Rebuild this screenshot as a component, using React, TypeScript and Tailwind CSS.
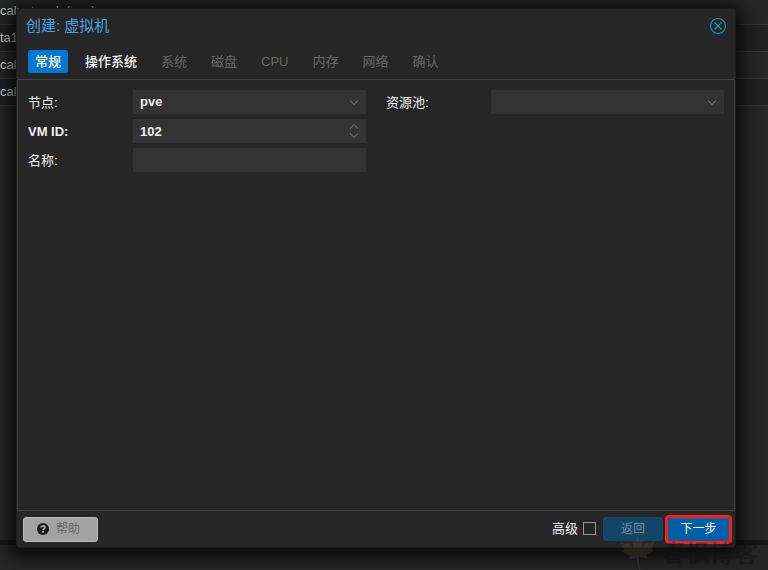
import React, { useState } from 'react';

const TABS = [
  { label: '常规', enabled: true },
  { label: '操作系统', enabled: true },
  { label: '系统', enabled: false },
  { label: '磁盘', enabled: false },
  { label: 'CPU', enabled: false },
  { label: '内存', enabled: false },
  { label: '网络', enabled: false },
  { label: '确认', enabled: false },
];

const STORAGE_ROWS = ['calnetwork (pve)', 'ta1 (pve)', 'cal (pve)', 'cal-lvm (pve)'];

export default function App() {
  const [node, setNode] = useState('pve');
  const [vmid, setVmid] = useState('102');
  const [name, setName] = useState('');
  const [pool, setPool] = useState('');
  const [advanced, setAdvanced] = useState(false);

  return (
    <div className="relative flex min-h-screen flex-col bg-[#262626] font-['Liberation_Sans','Noto_Sans_CJK_SC',sans-serif] text-[13px] text-[#f0f0f0]">
      <ResourceList />
      <div className="absolute inset-0 flex pt-2 pr-8 pb-[22px] pl-4">
        <div
          role="dialog"
          aria-labelledby="wizard-title"
          className="flex min-w-0 flex-1 flex-col rounded border border-[#1c1c1c] bg-[#262626] shadow-[0_3px_16px_7px_rgba(0,0,0,0.75)]"
        >
          <header className="flex h-[33px] items-center justify-between pt-px pr-2 pl-[9px]">
            <h1 id="wizard-title" className="text-[15px] text-[#4aa3df]">创建: 虚拟机</h1>
            <button aria-label="关闭" className="text-[#2594c4]">
              <CloseIcon />
            </button>
          </header>

          <nav role="tablist" className="flex h-[38px] items-start gap-2.5 border-b border-[#404040] px-[11px] pt-2">
            {TABS.map((t, i) => (
              <Tab key={t.label} label={t.label} active={i === 0} enabled={t.enabled} />
            ))}
          </nav>

          <main className="grid flex-1 grid-cols-2 content-start gap-x-5 border-x border-[#404040] px-2.5 pt-2.5">
            <div className="flex flex-col gap-[5px]">
              <Field id="node" label="节点:">
                <Select id="node" value={node} options={['pve']} onChange={setNode} />
              </Field>
              <Field id="vmid" label="VM ID:" strong>
                <input
                  id="vmid"
                  className="block h-6 w-full bg-[#333333] px-[7px] font-bold outline-none"
                  value={vmid}
                  onChange={(e) => setVmid(e.target.value)}
                />
                <Spinner onStep={(n) => setVmid(String(Number(vmid) + n))} />
              </Field>
              <Field id="name" label="名称:">
                <input
                  id="name"
                  className="block h-6 w-full bg-[#333333] px-[7px] font-bold outline-none"
                  value={name}
                  onChange={(e) => setName(e.target.value)}
                />
              </Field>
            </div>
            <div>
              <Field id="pool" label="资源池:">
                <Select id="pool" value={pool} options={['']} onChange={setPool} />
              </Field>
            </div>
          </main>

          <footer className="flex h-[37px] items-center border-t border-[#404040] pr-[3px] pl-1.5 text-xs">
            <button className="flex h-[25px] w-[75px] items-center gap-[7px] rounded-[3px] border border-[#bababa] bg-[#a3a3a3] pl-[13px] text-[#666666]">
              <HelpIcon />
              帮助
            </button>
            <label className="ml-auto flex items-center gap-[5px] text-[13px]">
              高级
              <input
                type="checkbox"
                className="size-[13px] appearance-none border border-[#969696] bg-[#262626] checked:bg-[#0078d4]"
                checked={advanced}
                onChange={(e) => setAdvanced(e.target.checked)}
              />
            </label>
            <button disabled className="ml-[7px] h-6 w-[60px] rounded-[3px] bg-[#134569] text-[#798b98]">
              返回
            </button>
            <button className="ml-0.5 h-[29px] w-[67px] rounded-[4px] border-[3px] border-[#fb2015] bg-[#0060a5] text-white">
              下一步
            </button>
          </footer>
        </div>
      </div>
      <Watermark />
    </div>
  );
}

// storage list of the main window, mostly covered by the wizard
function ResourceList() {
  return (
    <>
      <ul aria-hidden className="-mt-0.5 flex-1 text-[#d4d4d4]">
        {STORAGE_ROWS.map((r) => (
          <li key={r} className="h-[27px] border-b border-[#363636] leading-[26px] even:bg-[#212121]">
            {r}
          </li>
        ))}
      </ul>
      <div className="h-[5px] bg-[#171717]" />
      <div className="h-[25px]" />
    </>
  );
}

function Tab({ label, active, enabled }: { label: string; active: boolean; enabled: boolean }) {
  const tone = active
    ? 'bg-[#0078d4] font-medium text-white'
    : enabled
      ? 'font-medium text-[#f0f0f0]'
      : 'text-[#666666]';
  return (
    <button
      role="tab"
      aria-selected={active}
      disabled={!enabled}
      className={`h-[23px] shrink-0 rounded-xs px-[7px] ${tone}`}
    >
      {label}
    </button>
  );
}

function Field({ id, label, strong = false, children }: {
  id: string;
  label: string;
  strong?: boolean;
  children: React.ReactNode;
}) {
  return (
    <div className="flex h-6 items-center">
      <label htmlFor={id} className={`w-[105px] shrink-0 pt-0.5 ${strong ? 'font-bold' : ''}`}>{label}</label>
      <div className="relative min-w-0 flex-1">{children}</div>
    </div>
  );
}

function Select({ id, value, options, onChange }: {
  id: string;
  value: string;
  options: string[];
  onChange: (v: string) => void;
}) {
  return (
    <>
      <select
        id={id}
        className="block h-6 w-full appearance-none bg-[#333333] px-[7px] font-bold outline-none"
        value={value}
        onChange={(e) => onChange(e.target.value)}
      >
        {options.map((o) => (
          <option key={o} value={o}>{o}</option>
        ))}
      </select>
      <div className="pointer-events-none absolute inset-y-0 right-2 flex items-center text-[#666666]">
        <Chevron />
      </div>
    </>
  );
}

function Spinner({ onStep }: { onStep: (n: number) => void }) {
  return (
    <div className="absolute inset-y-0 right-2 flex flex-col justify-center gap-1 text-[#666666]">
      <button aria-label="增加" onClick={() => onStep(1)}><Chevron up /></button>
      <button aria-label="减少" onClick={() => onStep(-1)}><Chevron /></button>
    </div>
  );
}

function Chevron({ up = false }: { up?: boolean }) {
  return (
    <svg width="8" height="5" viewBox="0 0 8 5" fill="none" stroke="currentColor" className="block overflow-visible">
      <path d={up ? 'M0 4.5 4 .5 8 4.5' : 'M0 .5 4 4.5 8 .5'} strokeWidth="1.2" />
    </svg>
  );
}

function CloseIcon() {
  return (
    <svg width="18" height="18" viewBox="0 0 18 18" fill="none" stroke="currentColor" className="block">
      <circle cx="9" cy="9" r="7.5" strokeWidth="1.1" />
      <path d="M5.5 5.5 12.5 12.5M12.5 5.5 5.5 12.5" strokeWidth="1.1" />
    </svg>
  );
}

function HelpIcon() {
  return (
    <svg width="12" height="12" viewBox="0 0 12 12" fill="none" className="block">
      <circle cx="6" cy="6" r="6" fill="#1c1c1c" />
      <path d="M4 4.5C4.1 2.4 8 2.3 8 4.4 8 5.7 6.1 5.6 6.1 7.2" stroke="#b0b0b0" strokeWidth="1.6" />
      <path d="M5.2 8.1h1.7v1.6H5.2z" fill="#b0b0b0" />
    </svg>
  );
}

function Watermark() {
  return (
    <div aria-hidden className="pointer-events-none absolute right-2.5 bottom-0 flex items-end gap-1.5">
      <svg width="36" height="36" viewBox="0 0 36 36" className="opacity-20">
        <path
          d="M17.500 1.500 19.500 7l3-2-.5 9 6-7 .5 3 6-3-3 8 2 2-7 4 1 3-9-1c0 6 1 10 2.500 15h-1c-2-5-3-9-3-14l-8 1 1-3-9-5 3-1-4-8 6 3 1-3 6 6-.5-8 3 2z"
          fill="#7a6544"
        />
      </svg>
      <span className="pb-1.5 font-['Noto_Sans_CJK_SC',sans-serif] text-2xl leading-6 font-bold text-[#101010]/35">春枫博客</span>
    </div>
  );
}
